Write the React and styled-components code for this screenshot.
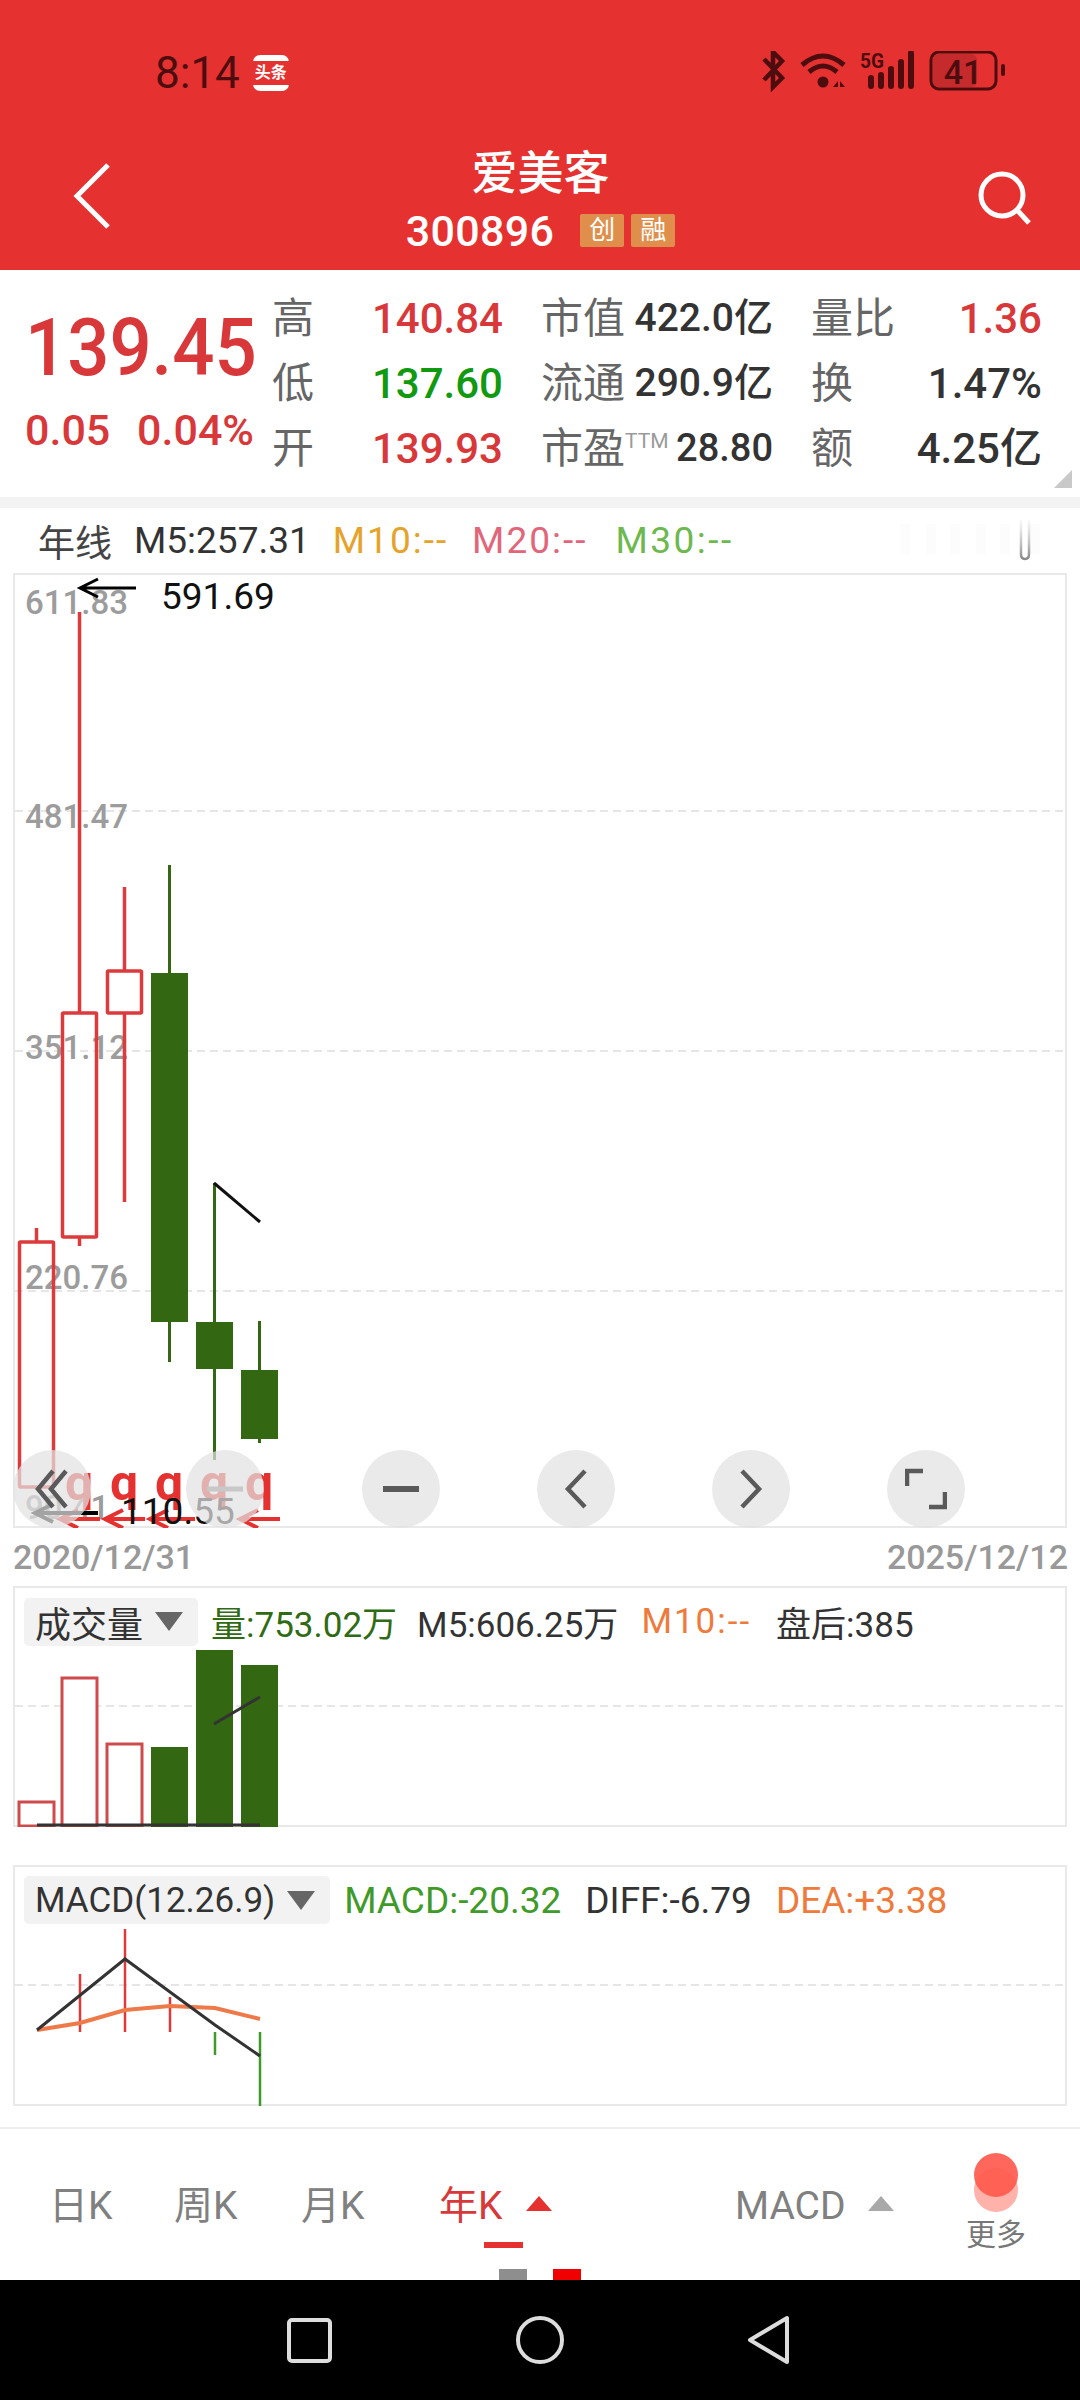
import React from "react";
import styled, { createGlobalStyle } from "styled-components";

const CJK = `"Roboto", "Noto Sans CJK SC", sans-serif`;
const RED = "#e63131";

const Global = createGlobalStyle`
  html, body { margin: 0; padding: 0; background: #fff; }
  body { font-family: ${CJK}; }
  #root { width: 1080px; height: 2400px; overflow: hidden; }
`;

const Page = styled.div`
  width: 1080px;
  height: 2400px;
  display: flex;
  flex-direction: column;
  background: #fff;
  position: relative;
`;

const Header = styled.header`
  height: 270px;
  background: ${RED};
  display: flex;
  flex-direction: column;
`;

const StatusBar = styled.div`
  height: 146px;
  display: flex;
  align-items: flex-start;
  justify-content: space-between;
  padding: 52px 72px 0 155px;
  box-sizing: border-box;
  color: #4d0d0f;
`;

const StatusLeft = styled.div`
  display: flex;
  align-items: center;
  gap: 13px;
`;

const Clock = styled.span`
  font-size: 44px;
  line-height: 42px;
  font-weight: 400;
`;

const NewsBadge = styled.span`
  width: 36px;
  height: 36px;
  border-radius: 7px;
  background: #fff;
  display: flex;
  align-items: center;
  justify-content: center;
`;

const NewsBadgeInner = styled.span`
  width: 36px;
  height: 24px;
  background: ${RED};
  color: #fff;
  font-size: 16px;
  line-height: 24px;
  text-align: center;
  font-weight: 700;
  white-space: nowrap;
`;

const StatusIcons = styled.svg`
  display: block;
  margin-top: -1px;
`;

const Nav = styled.div`
  flex: 1;
  display: flex;
  align-items: center;
  justify-content: space-between;
  padding: 0 48px 0 73px;
`;

const NavIcon = styled.svg`
  display: block;
  margin-top: ${p => p.$lift}px;
`;

const NavTitle = styled.div`
  display: flex;
  flex-direction: column;
  align-items: center;
  color: #fff;
  margin: -18px 8px 0 0;
`;

const StockName = styled.div`
  font-size: 46px;
  line-height: 54px;
  font-weight: 500;
`;

const CodeRow = styled.div`
  display: flex;
  align-items: center;
  margin-top: 9px;
`;

const StockCode = styled.span`
  font-size: 43px;
  line-height: 44px;
  font-weight: 500;
  margin-right: 26px;
  letter-spacing: 0.3px;
`;

const Tag = styled.span`
  width: 44px;
  height: 33px;
  background: #df8f4b;
  margin-right: 7px;
  font-size: 26px;
  line-height: 33px;
  text-align: center;
  color: #fff;
  border-radius: 2px;
  &:last-child { margin-right: 0; }
`;

const Quote = styled.section`
  height: 227px;
  display: flex;
  align-items: flex-start;
  position: relative;
`;

const PriceBlock = styled.div`
  width: 272px;
  box-sizing: border-box;
  padding: 43px 0 0 25px;
  color: #d9383a;
`;

const BigPrice = styled.div`
  font-size: 79px;
  line-height: 70px;
  font-weight: 500;
  white-space: nowrap;
  width: 230px;
  transform-origin: left center;
  transform: scaleX(0.94);
`;

const Change = styled.div`
  margin-top: 24px;
  width: 229px;
  display: flex;
  justify-content: space-between;
  font-size: 43px;
  line-height: 46px;
  font-weight: 500;
  white-space: nowrap;
`;

const StatsGrid = styled.div`
  display: grid;
  grid-template-columns: 231px 232px 231px;
  grid-auto-rows: 65px;
  column-gap: 38px;
  padding-top: 16px;
`;

const Stat = styled.div`
  display: flex;
  align-items: center;
  justify-content: space-between;
  white-space: nowrap;
`;

const StatLabel = styled.span`
  font-size: 42px;
  color: #666;
  font-weight: 400;
  line-height: 65px;
`;

const Sup = styled.sup`
  font-size: 21px;
  color: #9a9a9a;
  line-height: 0;
  vertical-align: 15px;
`;

const tone = { red: "#d9383a", green: "#119a11", dark: "#333" };

const StatValue = styled.span`
  font-size: ${p => p.$size || 42}px;
  font-weight: 500;
  color: ${p => tone[p.$tone]};
  line-height: 65px;
`;

const CornerMark = styled.span`
  position: absolute;
  right: 8px;
  bottom: 9px;
  width: 0;
  height: 0;
  border-left: 18px solid transparent;
  border-bottom: 18px solid #c9c9c9;
`;

const Strip = styled.div`
  height: 11px;
  background: #f3f3f3;
`;

const LegendRow = styled.div`
  height: 65px;
  display: flex;
  align-items: center;
  font-size: 37px;
  white-space: nowrap;
  padding-left: 38px;
  position: relative;
`;

const LegendItem = styled.span`
  color: ${p => p.$color || "#333"};
  margin-left: ${p => p.$gap || 0}px;
  letter-spacing: ${p => p.$track || 0}px;
`;

const GhostIcons = styled.svg`
  position: absolute;
  right: 37px;
  top: 10px;
`;

const ChartFrame = styled.div`
  margin: 0 13px;
  border: 2px solid #e9e9e9;
  box-sizing: border-box;
  position: relative;
  height: ${p => p.$h}px;
`;

const ChartSvg = styled.svg`
  position: absolute;
  left: -15px;
  top: -2px;
  display: block;
`;

const AxisText = styled.text`
  font-family: ${CJK};
  font-size: 33px;
  font-weight: 500;
  fill: #9c9c9c;
`;

const MarkText = styled.text`
  font-family: ${CJK};
  font-size: 37px;
  fill: #111;
`;

const RedGlyph = styled.text`
  font-family: ${CJK};
  font-size: 50px;
  font-weight: 700;
  fill: ${RED};
`;

const RoundRow = styled.div`
  position: absolute;
  left: 0;
  right: 0;
  bottom: -2px;
  height: 78px;
`;

const RoundBtn = styled.span`
  position: absolute;
  left: ${p => p.$x}px;
  width: 78px;
  height: 78px;
  border-radius: 50%;
  background: rgba(226, 226, 226, 0.72);
  display: flex;
  align-items: center;
  justify-content: center;
`;

const DateRow = styled.div`
  height: 58px;
  margin: 0 12px 0 13px;
  display: flex;
  align-items: center;
  justify-content: space-between;
  font-size: 34px;
  font-weight: 500;
  color: #999;
`;

const SubChart = styled(ChartFrame)`
  margin-bottom: 38px;
`;

const SubHead = styled.div`
  position: absolute;
  left: 9px;
  top: 8px;
  display: flex;
  align-items: center;
  font-size: 35px;
  white-space: nowrap;
  z-index: 1;
`;

const MacdHead = styled(SubHead)`
  font-size: 37px;
  top: 9px;
`;

const Chip = styled.div`
  height: 48px;
  background: #f2f2f2;
  border-radius: 5px;
  display: flex;
  align-items: center;
  padding: 0 15px 0 11px;
  gap: 12px;
  color: #333;
  margin-right: ${p => p.$after || 14}px;
`;

const ChipText = styled.span`
  font-size: ${p => p.$size || 36}px;
`;

const ChipCaret = styled.span`
  width: 0;
  height: 0;
  border-left: 14px solid transparent;
  border-right: 14px solid transparent;
  border-top: 19px solid #666;
`;

const TabBar = styled.nav`
  position: absolute;
  left: 0;
  right: 0;
  top: 2127px;
  height: 153px;
  border-top: 2px solid #eee;
  box-sizing: border-box;
`;

const Tab = styled.span`
  position: absolute;
  left: ${p => p.$x}px;
  top: 50px;
  font-size: 39px;
  line-height: 54px;
  color: ${p => (p.$active ? "#d9383a" : "#808080")};
  white-space: nowrap;
`;

const Caret = styled.span`
  position: absolute;
  left: ${p => p.$x}px;
  top: 67px;
  width: 0;
  height: 0;
  border-left: 13px solid transparent;
  border-right: 13px solid transparent;
  border-bottom: 15px solid ${p => p.$color};
`;

const ActiveLine = styled.span`
  position: absolute;
  left: 484px;
  top: 113px;
  width: 39px;
  height: 6px;
  background: ${RED};
`;

const Dot = styled.span`
  position: absolute;
  left: 974px;
  top: ${p => p.$top}px;
  width: 44px;
  height: 44px;
  border-radius: 50%;
  background: ${p => p.$color};
`;

const MoreLabel = styled.span`
  position: absolute;
  left: 966px;
  top: 86px;
  font-size: 30px;
  line-height: 40px;
  color: #777;
  white-space: nowrap;
`;

const Marker = styled.span`
  position: absolute;
  left: ${p => p.$x}px;
  bottom: 0;
  width: 28px;
  height: 11px;
  background: ${p => p.$color};
`;

const SystemNav = styled.div`
  position: absolute;
  left: 0;
  right: 0;
  bottom: 0;
  height: 120px;
  background: #000;
  display: flex;
  align-items: center;
  justify-content: center;
`;

const Candle = ({ x, w = 37, top, bottom, wt, wb, up }) => {
  const c = up ? "#dd3a3c" : "#336712";
  const cx = x + w / 2;
  return (
    <g>
      {wt !== undefined && <line x1={cx} x2={cx} y1={wt} y2={top} stroke={c} strokeWidth={up ? 3.5 : 3} />}
      {wb !== undefined && <line x1={cx} x2={cx} y1={bottom} y2={wb} stroke={c} strokeWidth={up ? 3.5 : 3} />}
      {up ? (
        <rect x={x + 1.5} y={top} width={w - 3} height={bottom - top} fill="none" stroke={c} strokeWidth="3.5" rx="1" />
      ) : (
        <rect x={x} y={top} width={w} height={bottom - top} fill={c} />
      )}
    </g>
  );
};

const Arrow = ({ x1, x2, y, color, w = 3 }) => (
  <path d={`M${x2} ${y}H${x1}M${x1 + 18} ${y - 9}L${x1} ${y}L${x1 + 18} ${y + 9}`} fill="none" stroke={color} strokeWidth={w} />
);

const grid = "#dedede";

const PriceChart = () => (
  <ChartSvg width="1080" height="955" viewBox="0 573 1080 955">
    {[811, 1051, 1291].map(y => (
      <line key={y} x1="15" x2="1066" y1={y} y2={y} stroke={grid} strokeWidth="1.5" strokeDasharray="8 5" />
    ))}
    <AxisText x="25" y="614">611.83</AxisText>
    <AxisText x="25" y="828">481.47</AxisText>
    <AxisText x="25" y="1059">351.12</AxisText>
    <AxisText x="25" y="1289">220.76</AxisText>
    <AxisText x="25" y="1519">90.41</AxisText>
    <Arrow x1={80} x2={136} y={588} color="#000" />
    <MarkText x="161" y="609">591.69</MarkText>
    <Candle x={18} top={1242} bottom={1487} wt={1228} up />
    <Candle x={61} top={1013} bottom={1237} wt={612} wb={1246} up />
    <Candle x={106} top={971} bottom={1013} wt={887} wb={1202} up />
    <Candle x={151} top={973} bottom={1322} wt={865} wb={1362} />
    <Candle x={196} top={1322} bottom={1369} wt={1183} wb={1460} />
    <Candle x={241} top={1370} bottom={1439} wt={1321} wb={1443} />
    <line x1="214" y1="1183" x2="260" y2="1222" stroke="#111" strokeWidth="3" />
    <RedGlyph x="65" y="1500">q</RedGlyph>
    <RedGlyph x="110" y="1500">q</RedGlyph>
    <RedGlyph x="155" y="1500">q</RedGlyph>
    <RedGlyph x="200" y="1500">q</RedGlyph>
    <RedGlyph x="245" y="1500">q</RedGlyph>
    <Arrow x1={60} x2={100} y={1519} color={RED} w={4} />
    <Arrow x1={105} x2={145} y={1519} color={RED} w={4} />
    <Arrow x1={150} x2={195} y={1519} color={RED} w={4} />
    <Arrow x1={240} x2={280} y={1519} color={RED} w={4} />
    <Arrow x1={35} x2={98} y={1513} color="#000" w={4} />
    <MarkText x="121" y="1524">110.55</MarkText>
  </ChartSvg>
);

const VolBar = ({ x, top, up }) =>
  up ? (
    <rect x={x + 1} y={top} width="35" height={1826 - top} fill="#fff" stroke="#cf4a4c" strokeWidth="3" />
  ) : (
    <rect x={x} y={top} width="37" height={1828 - top} fill="#336712" />
  );

const VolumeChart = () => (
  <ChartSvg width="1080" height="241" viewBox="0 1586 1080 241">
    <line x1="15" x2="1066" y1="1706" y2="1706" stroke={grid} strokeWidth="1.5" strokeDasharray="8 5" />
    <VolBar x={18} top={1802} up />
    <VolBar x={61} top={1678} up />
    <VolBar x={106} top={1744} up />
    <VolBar x={151} top={1747} />
    <VolBar x={196} top={1650} />
    <VolBar x={241} top={1665} />
    <line x1="37" x2="260" y1="1825" y2="1825" stroke="#333" strokeWidth="3" />
    <line x1="214" y1="1724" x2="260" y2="1697" stroke="#333" strokeWidth="3" />
  </ChartSvg>
);

const MacdChart = () => (
  <ChartSvg width="1080" height="241" viewBox="0 1865 1080 241">
    <line x1="15" x2="1066" y1="1985" y2="1985" stroke={grid} strokeWidth="1.5" strokeDasharray="8 5" />
    <path d="M80 1974V2032M125 1929V2032M170 1997V2032" stroke="#dd3a3c" strokeWidth="2.5" />
    <path d="M215 2032V2055M260 2032V2106" stroke="#3f9a2a" strokeWidth="2.5" />
    <polyline points="37,2030 80,2023 125,2010 170,2006 215,2008 260,2019" fill="none" stroke="#ee7a4a" strokeWidth="4" />
    <polyline points="37,2030 125,1959 170,1992 215,2025 260,2056" fill="none" stroke="#333" strokeWidth="3" />
  </ChartSvg>
);

const btnStroke = { fill: "none", stroke: "#5a5a5a", strokeWidth: 4.5 };

const App = () => (
  <Page>
    <Global />
    <Header>
      <StatusBar>
        <StatusLeft>
          <Clock>8:14</Clock>
          <NewsBadge><NewsBadgeInner>头条</NewsBadgeInner></NewsBadge>
        </StatusLeft>
        <StatusIcons width="246" height="42" viewBox="762 54 246 42">
          <path d="M764 62L782 81L773 90V55L782 64L764 83" fill="none" stroke="#4d0d0f" strokeWidth="4.5" />
          <path d="M802 68Q823 50 844 68" fill="none" stroke="#4d0d0f" strokeWidth="5" />
          <path d="M809 75Q823 63 837 75" fill="none" stroke="#4d0d0f" strokeWidth="5" />
          <circle cx="823" cy="85" r="5.5" fill="#4d0d0f" />
          <path d="M833 90l5-6v6zM840 84l5 6h-5z" fill="#4d0d0f" />
          <text x="860" y="71" fontFamily="Roboto" fontWeight="700" fontSize="20" fill="#4d0d0f" textLength="24" lengthAdjust="spacingAndGlyphs">5G</text>
          <path d="M871 81v8M881 78v11M891 72v17M901 65v24M911 56v33" stroke="#4d0d0f" strokeWidth="6" strokeLinecap="round" />
          <rect x="931" y="55" width="65" height="37" rx="8" fill="none" stroke="#4d0d0f" strokeWidth="3" />
          <rect x="933" y="57" width="44" height="33" rx="6" fill="#c52a2c" />
          <text x="963" y="87" textAnchor="middle" fontFamily="Roboto" fontWeight="500" fontSize="34" fill="#4d0d0f">41</text>
          <rect x="1001" y="67" width="4" height="12" rx="2" fill="#4d0d0f" />
        </StatusIcons>
      </StatusBar>
      <Nav>
        <NavIcon $lift={-24} width="38" height="66" viewBox="0 0 38 66">
          <path d="M35 2L4 33L35 64" fill="none" stroke="#fff" strokeWidth="5" />
        </NavIcon>
        <NavTitle>
          <StockName>爱美客</StockName>
          <CodeRow>
            <StockCode>300896</StockCode>
            <Tag>创</Tag>
            <Tag>融</Tag>
          </CodeRow>
        </NavTitle>
        <NavIcon $lift={-20} width="54" height="54" viewBox="0 0 54 54">
          <circle cx="24" cy="24" r="21" fill="none" stroke="#fff" strokeWidth="5" />
          <line x1="39" y1="39" x2="51" y2="52" stroke="#fff" strokeWidth="5" />
        </NavIcon>
      </Nav>
    </Header>

    <Quote>
      <PriceBlock>
        <BigPrice>139.45</BigPrice>
        <Change><span>0.05</span><span>0.04%</span></Change>
      </PriceBlock>
      <StatsGrid>
        <Stat><StatLabel>高</StatLabel><StatValue $tone="red">140.84</StatValue></Stat>
        <Stat><StatLabel>市值</StatLabel><StatValue $tone="dark" $size={39}>422.0亿</StatValue></Stat>
        <Stat><StatLabel>量比</StatLabel><StatValue $tone="red">1.36</StatValue></Stat>
        <Stat><StatLabel>低</StatLabel><StatValue $tone="green">137.60</StatValue></Stat>
        <Stat><StatLabel>流通</StatLabel><StatValue $tone="dark" $size={39}>290.9亿</StatValue></Stat>
        <Stat><StatLabel>换</StatLabel><StatValue $tone="dark">1.47%</StatValue></Stat>
        <Stat><StatLabel>开</StatLabel><StatValue $tone="red">139.93</StatValue></Stat>
        <Stat><StatLabel>市盈<Sup>TTM</Sup></StatLabel><StatValue $tone="dark" $size={38}>28.80</StatValue></Stat>
        <Stat><StatLabel>额</StatLabel><StatValue $tone="dark">4.25亿</StatValue></Stat>
      </StatsGrid>
      <CornerMark />
    </Quote>
    <Strip />

    <LegendRow>
      <LegendItem $color="#444">年线</LegendItem>
      <LegendItem $gap={22}>M5:257.31</LegendItem>
      <LegendItem $gap={23} $color="#e5a32b" $track={2}>M10:--</LegendItem>
      <LegendItem $gap={24} $color="#e2667a" $track={2}>M20:--</LegendItem>
      <LegendItem $gap={28} $color="#6db84f" $track={2.5}>M30:--</LegendItem>
      <GhostIcons width="150" height="44" viewBox="0 0 150 44">
        <defs>
          <linearGradient id="ghostFade" x1="0" y1="0" x2="0" y2="1">
            <stop offset="0" stopColor="#bbb" stopOpacity="0.1" />
            <stop offset="1" stopColor="#888" />
          </linearGradient>
        </defs>
        <path d="M12 6v30M38 6v30M62 6v30M88 6v30M112 6v30M142 6v30" stroke="#fcfcfc" strokeWidth="10" />
        <path d="M128 2V36Q128 41 132 41T136 36V2" fill="none" stroke="url(#ghostFade)" strokeWidth="2.5" />
      </GhostIcons>
    </LegendRow>

    <ChartFrame $h={955}>
      <PriceChart />
      <RoundRow>
        <RoundBtn $x={-2}>
          <svg width="40" height="40" viewBox="0 0 40 40"><path {...btnStroke} d="M21 2L6 20L21 38M34 2L19 20L34 38" /></svg>
        </RoundBtn>
        <RoundBtn $x={171}>
          <svg width="36" height="6" viewBox="0 0 36 6"><path d="M0 3H36" stroke="#c8c8c8" strokeWidth="5" /></svg>
        </RoundBtn>
        <RoundBtn $x={347}>
          <svg width="36" height="6" viewBox="0 0 36 6"><path d="M0 3H36" stroke="#5a5a5a" strokeWidth="6" /></svg>
        </RoundBtn>
        <RoundBtn $x={522}>
          <svg width="24" height="40" viewBox="0 0 24 40"><path {...btnStroke} d="M21 2L4 20L21 38" /></svg>
        </RoundBtn>
        <RoundBtn $x={697}>
          <svg width="24" height="40" viewBox="0 0 24 40"><path {...btnStroke} d="M3 2L20 20L3 38" /></svg>
        </RoundBtn>
        <RoundBtn $x={872}>
          <svg width="42" height="42" viewBox="0 0 42 42"><path {...btnStroke} d="M2 18V3H18M40 24V39H24" /></svg>
        </RoundBtn>
      </RoundRow>
    </ChartFrame>

    <DateRow><span>2020/12/31</span><span>2025/12/12</span></DateRow>

    <SubChart $h={241}>
      <VolumeChart />
      <SubHead>
        <Chip $after={13}><ChipText>成交量</ChipText><ChipCaret /></Chip>
        <LegendItem $color="#2f6b14">量:753.02万</LegendItem>
        <LegendItem $gap={20}>M5:606.25万</LegendItem>
        <LegendItem $gap={23} $color="#ee7a3c" $track={2}>M10:--</LegendItem>
        <LegendItem $gap={25}>盘后:385</LegendItem>
      </SubHead>
    </SubChart>

    <SubChart $h={241}>
      <MacdChart />
      <MacdHead>
        <Chip><ChipText $size={35}>MACD(12.26.9)</ChipText><ChipCaret /></Chip>
        <LegendItem $color="#3f9a2a">MACD:-20.32</LegendItem>
        <LegendItem $gap={24}>DIFF:-6.79</LegendItem>
        <LegendItem $gap={24} $color="#ee7a3c">DEA:+3.38</LegendItem>
      </MacdHead>
    </SubChart>

    <TabBar>
      <Tab $x={49}>日K</Tab>
      <Tab $x={174}>周K</Tab>
      <Tab $x={301}>月K</Tab>
      <Tab $x={439} $active>年K</Tab>
      <Caret $x={526} $color={RED} />
      <ActiveLine />
      <Tab $x={735}>MACD</Tab>
      <Caret $x={868} $color="#a8a8a8" />
      <Dot $top={39} $color="#ffb2aa" />
      <Dot $top={24} $color="rgba(255, 90, 78, 0.92)" />
      <MoreLabel>更多</MoreLabel>
      <Marker $x={499} $color="#8e8e8e" />
      <Marker $x={553} $color="#f00000" />
    </TabBar>

    <SystemNav>
      <svg width="1080" height="120" viewBox="0 2280 1080 120">
        <rect x="289" y="2320" width="41" height="41" rx="3" fill="none" stroke="#ddd" strokeWidth="4" />
        <circle cx="540" cy="2340" r="22" fill="none" stroke="#ddd" strokeWidth="4" />
        <path d="M787 2318V2362L750 2340Z" fill="none" stroke="#ddd" strokeWidth="4" strokeLinejoin="round" />
      </svg>
    </SystemNav>
  </Page>
);

export default App;
